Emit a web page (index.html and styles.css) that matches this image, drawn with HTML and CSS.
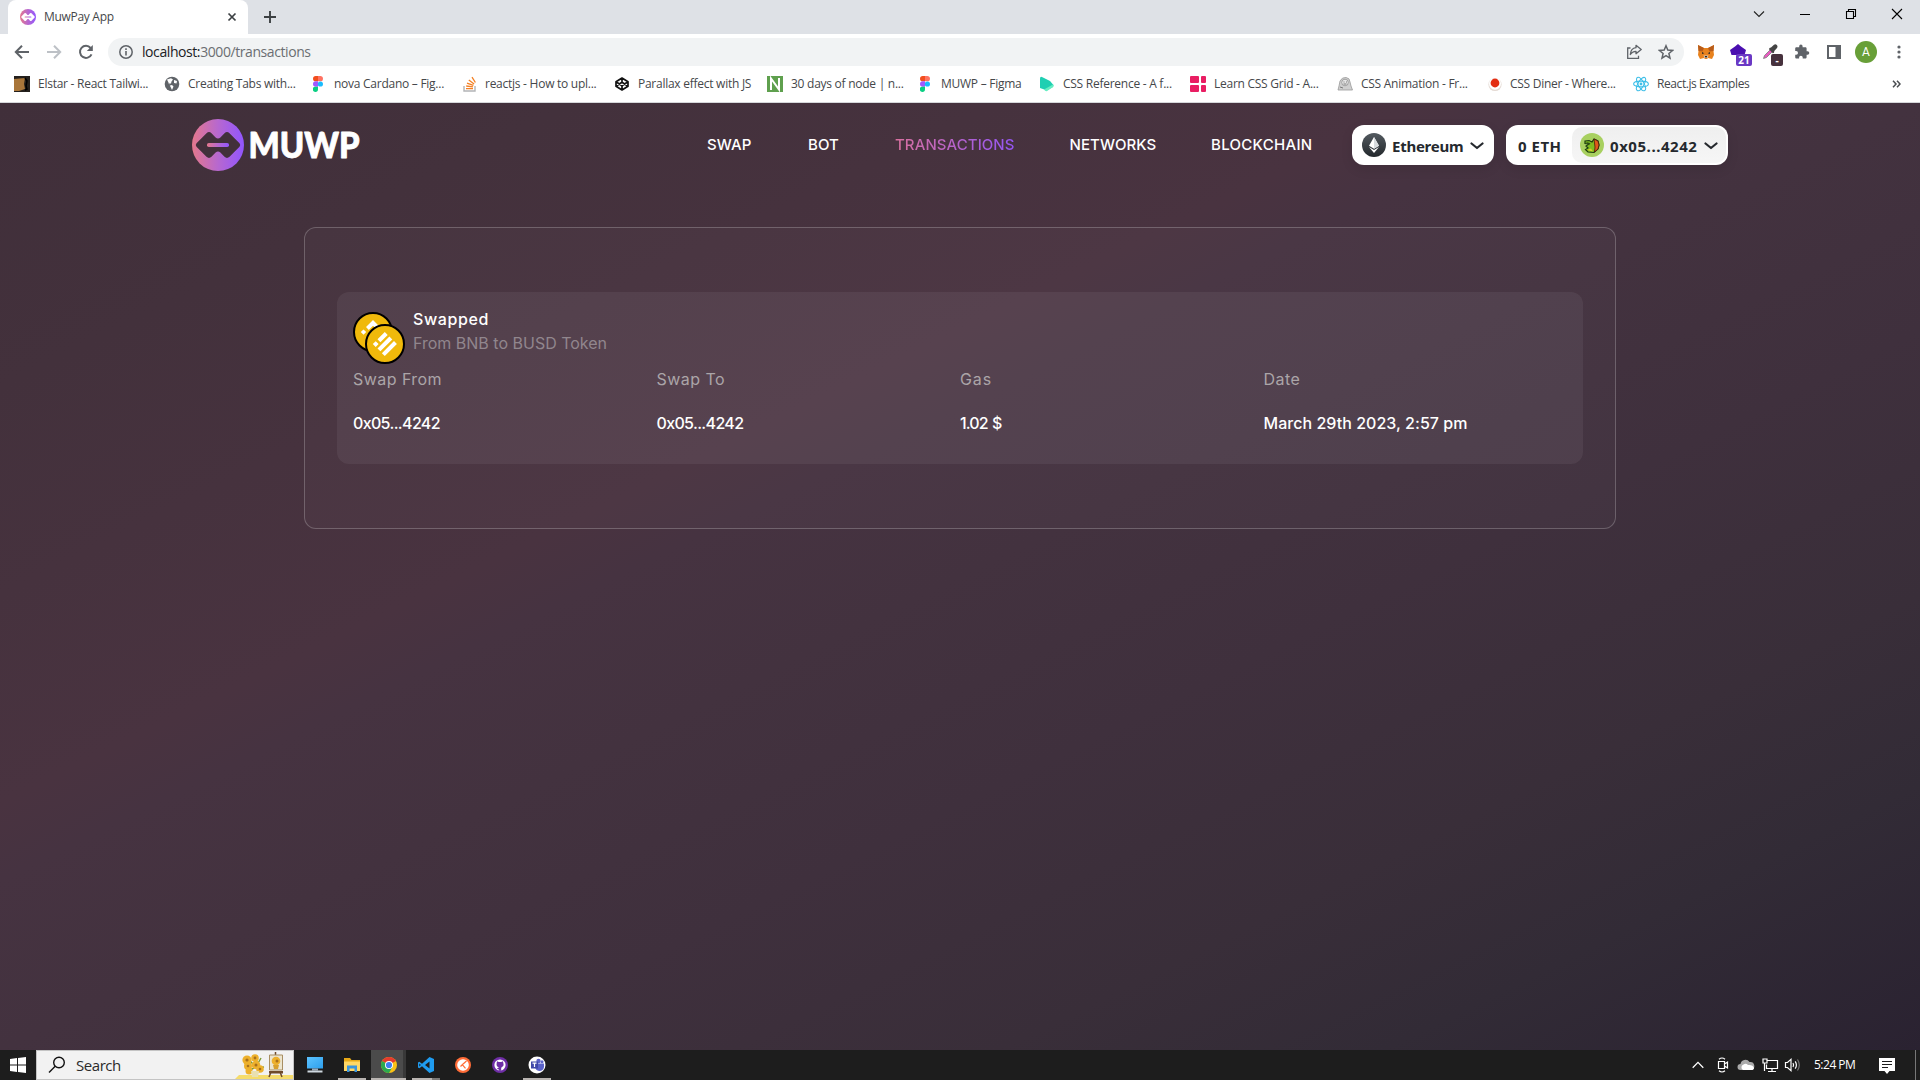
FILE: index.html
```html
<!DOCTYPE html>
<html lang="en">
<head>
<meta charset="utf-8">
<title>MuwPay App</title>
<link rel="stylesheet" href="styles.css">
</head>
<body>
<svg class="defs" width="0" height="0">
  <defs>
    <linearGradient id="brand" x1="0" x2="1" y1="0" y2="0"><stop offset="0" stop-color="#e4788c"/><stop offset=".5" stop-color="#b768cf"/><stop offset="1" stop-color="#9155ff"/></linearGradient>
    <linearGradient id="ethbg" x1="0" x2="0" y1="0" y2="1"><stop offset="0" stop-color="#535a60"/><stop offset="1" stop-color="#23282c"/></linearGradient>
    <linearGradient id="screen" x1="0" x2="1" y1="0" y2="1"><stop offset="0" stop-color="#5cc3ff"/><stop offset="1" stop-color="#2d9fec"/></linearGradient>
    <symbol id="figma" viewBox="0 0 10 16"><path d="M5 0H2.700a2.600 2.600 0 0 0 0 5.300H5z" fill="#f24e1e"/><path d="M5 0h2.300a2.600 2.600 0 0 1 0 5.300H5z" fill="#ff7262"/><path d="M5 5.300H2.700a2.700 2.700 0 0 0 0 5.400H5z" fill="#a259ff"/><circle cx="7.400" cy="8" r="2.600" fill="#1abcfe"/><path d="M5 10.700H2.700A2.600 2.600 0 1 0 5 13.300z" fill="#0acf83"/></symbol>
    <symbol id="mark" viewBox="0 0 52 52"><circle cx="26" cy="26" r="26" fill="url(#brand)"/><path class="cut" d="M4.500 24.200 L14.500 14.200 Q17 12 19.500 14.200 L23.600 18.400 Q26 20.400 28.400 18.400 L32.500 14.200 Q35 12 37.500 14.200 L47.500 24.200 Q49 26 47.500 27.800 L37.500 37.800 Q35 40 32.500 37.800 L28.400 33.600 Q26 31.600 23.600 33.600 L19.500 37.800 Q17 40 14.500 37.800 L4.500 27.800 Q3 26 4.500 24.200Z"/><rect x="15" y="24" width="22" height="4" rx="1.800" fill="url(#brand)"/></symbol>
  </defs>
</svg>

<div class="tabstrip">
  <div class="tab">
    <svg class="favicon" width="16" height="16"><use href="#mark"/></svg>
    <span class="tab-title">MuwPay App</span>
    <svg class="tab-close" width="16" height="16"><path d="M4.500 4.500l7 7M11.500 4.500l-7 7" stroke="#3c4043" stroke-width="1.700"/></svg>
  </div>
  <svg class="newtab" width="16" height="16"><path d="M8 2v12M2 8h12" stroke="#3c4043" stroke-width="1.900"/></svg>
  <div class="window-controls">
    <svg width="14" height="14"><path d="M2 4.500l5 5 5-5" fill="none" stroke="#222" stroke-width="1.100"/></svg>
    <svg width="14" height="14"><path d="M2 7.500h10" stroke="#000"/></svg>
    <svg width="14" height="14"><path d="M2.500 4.500h7v7h-7zM4.500 4.500v-2h7v7h-2" fill="none" stroke="#000" stroke-width="1.100"/></svg>
    <svg width="14" height="14"><path d="M2 2l10 10M12 2L2 12" stroke="#000" stroke-width="1.100"/></svg>
  </div>
</div>

<div class="toolbar">
  <div class="nav-buttons">
    <svg width="16" height="16"><path d="M15 8H2.500M8 1.800L1.800 8 8 14.200" fill="none" stroke="#5f6368" stroke-width="2"/></svg>
    <svg width="16" height="16"><path d="M1 8h12.500M8 1.800L14.200 8 8 14.200" fill="none" stroke="#bdc1c6" stroke-width="2"/></svg>
    <svg width="16" height="16"><path d="M13.500 10.300A6 6 0 1 1 12.600 4" fill="none" stroke="#5f6368" stroke-width="2"/><path d="M14.800 1v6H8.800z" fill="#5f6368"/></svg>
  </div>
  <div class="omnibox">
    <svg width="14" height="14"><circle cx="7" cy="7" r="6.200" fill="none" stroke="#5f6368" stroke-width="1.500"/><path d="M7 6v4.500M7 3.300v1.600" stroke="#5f6368" stroke-width="1.600"/></svg>
    <span class="url">localhost:<span class="url-path">3000/transactions</span></span>
    <svg class="share" width="16" height="16"><path d="M4.500 4H1.700v10.300h10.800v-2.500" fill="none" stroke="#5f6368" stroke-width="1.300"/><path d="M10 1.300L15.200 5.500 10 9.700V7.300C7.500 7.200 5.600 8.400 4.300 10.500 4.600 6.500 6.500 4.100 10 3.700z" fill="none" stroke="#5f6368" stroke-width="1.300" stroke-linejoin="round"/></svg>
    <svg width="16" height="16"><path d="M8 1.800l1.800 4.300 4.700.4-3.600 3 1.100 4.600L8 11.700l-4 2.400 1.100-4.600-3.600-3 4.700-.4z" fill="none" stroke="#5f6368" stroke-width="1.500"/></svg>
  </div>
  <div class="extensions">
    <svg width="16" height="16"><path d="M0 1l6 3h4l6-3-.5 6 .5 4-2 4-4-1-1 1H7l-1-1-4 1-2-4 .5-4z" fill="#e8821e"/><path d="M0 1l6 3-1.500 3.500L.5 7zM16 1l-6 3 1.500 3.500 4-.5z" fill="#b85c1a"/><path d="M5.500 11.500h5L9.500 14h-3z" fill="#dccbbd"/><path d="M4 8l2.300 1.300L4 10zM12 8L9.700 9.300 12 10zM6.700 12h2.600l-.5 1.500H7.200z" fill="#2b2b2b"/></svg>
    <div class="ext-badged">
      <svg width="16" height="16"><path d="M8 0l3 2.500L16 6l-1.500 5H1.500L0 6l5-3.500z" fill="#4a0fb0"/></svg>
      <span class="badge">21</span>
    </div>
    <div class="ext-badged">
      <svg width="16" height="16"><path d="M1.500 14.500l1-3L9 5l2 2-6.500 6.500z" fill="#e75bc0" stroke="#7b7b7b" stroke-width=".8"/><path d="M7.500 4l1.500-.5L12 .8q1.500-1 2.800.3t.2 2.900L12.300 7l-.3 1.700-1.200.5L7 5.300z" fill="#444"/></svg>
      <span class="badge badge-dark">-</span>
    </div>
    <svg width="16" height="16"><path d="M13.600 7.300h-1V4.600c0-.8-.6-1.300-1.300-1.300H8.600v-1a1.700 1.700 0 0 0-3.400 0v1H2.500c-.7 0-1.300.5-1.300 1.300v2.500h1a1.800 1.800 0 0 1 0 3.600h-1v2.600c0 .7.600 1.300 1.300 1.300h2.600v-1a1.800 1.800 0 0 1 3.600 0v1h2.600c.7 0 1.300-.6 1.300-1.300v-2.600h1a1.700 1.700 0 0 0 0-3.400z" fill="#5f6368"/></svg>
    <svg width="14" height="14"><path d="M0 0h14v14H0zM2 2v10h6.500V2z" fill="#5f6368" fill-rule="evenodd"/></svg>
    <span class="avatar">A</span>
    <svg class="kebab" width="4" height="16"><circle cx="2" cy="3" r="1.600" fill="#5f6368"/><circle cx="2" cy="8" r="1.600" fill="#5f6368"/><circle cx="2" cy="13" r="1.600" fill="#5f6368"/></svg>
  </div>
</div>

<div class="bookmarks">
  <div class="bm"><svg width="16" height="16"><path d="M0 0h16v16H0z" fill="#24201d"/><path d="M0 3l11-1-1 6 1 5-6 2H0z" fill="#a9763a"/><path d="M11 2l2 3-1 5 1 3-2 1" fill="none" stroke="#000" stroke-width="1.500"/></svg><span>Elstar - React Tailwi...</span></div>
  <div class="bm"><svg width="16" height="16"><circle cx="8" cy="8" r="7.300" fill="#5f6368"/><path d="M3 3.500L7 2.300l2 1.200-1.500 2-.5 2H4.500l1.500 2L8 9l1.500 1.500L8 14M10 4l3 1-.5 2.500L10 7z" fill="#fff"/></svg><span>Creating Tabs with...</span></div>
  <div class="bm bm-n21"><svg width="10" height="16"><use href="#figma"/></svg><span>nova Cardano – Fig...</span></div>
  <div class="bm bm-n22"><svg width="14" height="16"><path d="M1 10v5h11v-5" fill="none" stroke="#b3b4b6" stroke-width="1.400"/><path d="M3 12.600h7M3.200 10l6.800.9M4 7.200l6.400 2.200M5.800 4l5.300 4M9 1.200l3.400 5.300" stroke="#f48024" stroke-width="1.300"/></svg><span>reactjs - How to upl...</span></div>
  <div class="bm bm-n23"><svg width="14" height="16"><path d="M7 2l6 3.800v4.400L7 14l-6-3.800V5.800zM1 5.800l6 4 6-4M1 10.200l6-4 6 4M7 2v4.200M7 9.800V14" fill="none" stroke="#111" stroke-width="1.700" stroke-linejoin="round"/></svg><span>Parallax effect with JS</span></div>
  <div class="bm"><svg width="16" height="16"><path d="M0 0h16v16H0z" fill="#5fa04e"/><path d="M4 14V2.500l8 11V2" fill="none" stroke="#fff" stroke-width="2"/></svg><span>30 days of node | n...</span></div>
  <div class="bm bm-n21"><svg width="10" height="16"><use href="#figma"/></svg><span>MUWP – Figma</span></div>
  <div class="bm bm-n23"><svg width="14" height="16"><path d="M0 2.500Q0 0 2.500 1.200L10 5l3 3.500q1 1.200-.5 2.500L7 14.500 0 12z" fill="#1fcfb2"/><path d="M4 13.500l9-5 .6.800q.5 1-.8 1.900L7 15q-1.500.8-3-1.500z" fill="#65eec2"/></svg><span>CSS Reference - A f...</span></div>
  <div class="bm"><svg width="16" height="16" fill="#e91e63"><rect width="9" height="7" rx="1"/><rect x="11" width="5" height="7" rx="1"/><rect y="9" width="9" height="7" rx="1"/><rect x="11" y="9" width="5" height="7" rx="1"/></svg><span>Learn CSS Grid - A...</span></div>
  <div class="bm"><svg width="16" height="16"><path d="M1 14l1-4 1-5q2-4 6-3.500T13 6l1 4 1.500 4z" fill="#cfcfcf" stroke="#999" stroke-width=".8"/><circle cx="8" cy="6.500" r="3.300" fill="#e7e7e7" stroke="#888" stroke-width=".7"/><path d="M6.500 6h1M9 6h1M6.500 8h3M3 11l3 1" stroke="#777"/></svg><span>CSS Animation - Fr...</span></div>
  <div class="bm bm-n22"><svg width="14" height="16"><circle cx="7" cy="8.500" r="6.600" fill="#e4dad3"/><circle cx="7" cy="7.800" r="6" fill="#fff"/><circle cx="7" cy="7" r="4.400" fill="#e32d12"/></svg><span>CSS Diner - Where...</span></div>
  <div class="bm"><svg width="16" height="16"><g fill="none" stroke="#3fbfe8" stroke-width="1.100"><ellipse cx="8" cy="8" rx="7.400" ry="2.900"/><ellipse cx="8" cy="8" rx="7.400" ry="2.900" transform="rotate(60 8 8)"/><ellipse cx="8" cy="8" rx="7.400" ry="2.900" transform="rotate(120 8 8)"/></g><circle cx="8" cy="8" r="1.400" fill="#3fbfe8"/></svg><span class="bm-tight">React.js Examples</span></div>
  <svg class="overflow" width="9" height="8"><path d="M1 .8L4 4 1 7.200M5 .8L8 4 5 7.200" fill="none" stroke="#4a4d51" stroke-width="1.500"/></svg>
</div>

<main class="app">
  <header class="header">
    <svg class="logo" width="180" height="52">
      <use href="#mark" width="52" height="52"/>
      <text x="56.500" y="38.500" textLength="111" lengthAdjust="spacingAndGlyphs">MUWP</text>
    </svg>
    <nav class="menu">
      <a>SWAP</a><a>BOT</a><a class="active">TRANSACTIONS</a><a>NETWORKS</a><a class="wide">BLOCKCHAIN</a>
    </nav>
    <button class="chain">
      <svg width="24" height="24"><circle cx="12" cy="12" r="12" fill="url(#ethbg)"/><path d="M12 4v6.300l-5 2.400zM12 4v6.300l5 2.400zM7 12.700l5 3 5-3-5-2.400zM7 14l5 6 5-6-5 3z" fill="#fff"/><path d="M12 4v11.700l5-3z" fill="#d8dcdf"/></svg>
      <span class="chain-name">Ethereum</span>
      <svg class="caret" width="14" height="8"><path d="M1.500 1.500L7 6l5.500-4.500" fill="none" stroke="#25292e" stroke-width="2.200" stroke-linecap="round" stroke-linejoin="round"/></svg>
    </button>
    <button class="wallet">
      <span class="balance">0 ETH</span>
      <span class="account">
        <svg width="24" height="24"><circle cx="12" cy="12" r="12" fill="#a8d060"/><path d="M5 8l4-.5L12 9l2-3 4 2 1 4-1 4-4 3.500-6-.5-2.500-2.500L8 15l-2-2 3-2-4-.5z" fill="#7fbd1f" stroke="#1c3a10" stroke-width="1.200"/><path d="M14 6l4 2 1 4-1 4-3.500 3 .5-5z" fill="#e05a1b" stroke="#4a1d08" stroke-width=".8"/><path d="M6 9l4 1-1 2z" fill="#284a12"/><path d="M7 17l6 1.500-2-3z" fill="#d9cf2c"/></svg>
        <span class="address">0x05...4242</span>
        <svg class="caret" width="14" height="8"><path d="M1.500 1.500L7 6l5.500-4.500" fill="none" stroke="#25292e" stroke-width="2.200" stroke-linecap="round" stroke-linejoin="round"/></svg>
      </span>
    </button>
  </header>

  <section class="panel">
    <article class="tx">
      <div class="tx-head">
        <svg width="52" height="52">
          <circle cx="20" cy="20" r="19" fill="#f0b90b" stroke="#000" stroke-width="2"/>
          <path d="M20 8l7 7-2.800 2.800L20 13.700l-4.200 4.200L13 15zM10.500 17.400l2.700 2.700-2.700 2.700-2.700-2.700z" fill="#fff"/>
          <circle cx="32" cy="32" r="19" fill="#f0b90b" stroke="#000" stroke-width="2"/>
          <path d="M31.800 20l2.900 2.900-7.300 7.300-2.900-2.900zM36.400 24.500l2.900 2.900-11.900 11.900-2.900-2.900zM22.700 29.200l2.900 2.900-2.900 2.900-2.900-2.900zM41 29.100l2.900 2.900-12.100 12.100-2.900-2.900z" fill="#fff"/>
        </svg>
        <div class="tx-label">
          <p class="tx-title">Swapped</p>
          <p class="tx-route">From BNB to BUSD Token</p>
        </div>
      </div>
      <dl class="tx-grid">
        <div><dt class="ls-5">Swap From</dt><dd class="hex">0x05...4242</dd></div>
        <div><dt class="ls-5">Swap To</dt><dd class="hex">0x05...4242</dd></div>
        <div><dt class="ls-9">Gas</dt><dd class="hex gas">1.02 $</dd></div>
        <div><dt class="ls-5">Date</dt><dd>March 29th 2023, 2:57 pm</dd></div>
      </dl>
    </article>
  </section>
</main>

<footer class="taskbar">
  <div class="start"><svg width="16" height="16"><path d="M0 2l7-1v6.500H0zM8 .9L16 0v7.500H8zM0 8.500h7V15l-7-1zM8 8.500h8V16l-8-.9z" fill="#fff"/></svg></div>
  <div class="search">
    <svg class="lens" width="18" height="18"><circle cx="11" cy="6.500" r="5.300" fill="none" stroke="#111" stroke-width="1.400"/><path d="M7.200 10.300L1 16.500" stroke="#111" stroke-width="1.400"/></svg>
    <span>Search</span>
    <svg class="flowers" width="58" height="28"><path d="M4 24h54v4H0z" fill="#f5dc6c"/><path d="M19 14l-6-6M22 14l4-7M22 17l7-1M19 17l-6 3" stroke="#7c9a35" stroke-width="1.500"/><g fill="#edb02c"><circle cx="12" cy="9" r="4.600"/><circle cx="20" cy="7" r="3.800"/><circle cx="13" cy="15" r="4"/><circle cx="21" cy="14" r="4.300"/><circle cx="25" cy="18" r="3.800"/><circle cx="14" cy="20" r="3.500"/></g><g fill="#a8701b"><circle cx="12" cy="9" r="1.600"/><circle cx="20" cy="7" r="1.400"/><circle cx="21" cy="14" r="1.500"/><circle cx="25" cy="18" r="1.300"/><circle cx="13" cy="15" r="1.300"/></g><path d="M16 20h8l-1 6h-6z" fill="#e9e0b0"/><path d="M36 21l-2 5M45 21l2 5M40.500 1v3" stroke="#6e4a2a" stroke-width="1.500"/><path d="M34.500 4h13v15h-13z" fill="#ece5cf" stroke="#a88e62"/><circle cx="41" cy="10" r="4.300" fill="#edb02c"/><circle cx="42" cy="10" r="1.500" fill="#a8701b"/><path d="M38 14h6l-1 4h-4z" fill="#d8a02c"/><path d="M34 20h14v2.500H34z" fill="#6e4a2a"/></svg>
  </div>
  <div class="apps">
    <div class="app-icon"><svg width="18" height="18"><path d="M1 1h16v11.500H1z" fill="url(#screen)"/><path d="M6 12.500h6v2H6z" fill="#9ab"/><path d="M1.500 14.500h15v2h-15z" fill="#cfd8df"/></svg></div>
    <div class="app-icon open"><svg width="18" height="18"><path d="M1 2h6l1.500 2H17v5H1z" fill="#e8a917"/><path d="M1 5.500h16V15H1z" fill="#ffd765"/><path d="M4 9.500h10V16h-2.500v-3.500h-5V16H4z" fill="#3b95dc"/></svg></div>
    <div class="app-icon open current"><svg width="18" height="18"><circle cx="9" cy="9" r="8" fill="#fbc116"/><path d="M9 9L2.070 5A8 8 0 0 1 15.930 5z" fill="#e33b2e"/><path d="M9 9l-6.930-4A8 8 0 0 0 9 17l3.500-6z" fill="#2da94f"/><circle cx="9" cy="9" r="4" fill="#fff"/><circle cx="9" cy="9" r="3.100" fill="#3f7ef0"/></svg></div>
    <div class="app-icon open stacked"><svg width="18" height="18"><path d="M12.500 1L17 3v12l-4.500 2L5 10.200 2.300 12.300 1 11.600V6.400l1.300-.7L5 7.800zM12.500 5.500L8 9l4.500 3.500zM2.300 7.500v3L3.900 9z" fill="#1f9cf0" fill-rule="evenodd"/></svg></div>
    <div class="app-icon"><svg width="18" height="18"><circle cx="9" cy="9" r="8" fill="#ff6c37"/><circle cx="9" cy="9" r="5.800" fill="#fff"/><path d="M12.500 5L8.500 8.500 6.500 10.500M8.500 8.800l3 3.500" fill="none" stroke="#ff6c37" stroke-width="1.200"/></svg></div>
    <div class="app-icon"><svg width="18" height="18"><circle cx="9" cy="9" r="8" fill="#6e2ea5"/><circle cx="9" cy="9" r="5.600" fill="#fff"/><path d="M6 5.200l1.800.9h2.400l1.800-.9.300 1.800q1 2.800-1.300 4-.8.500-.8 1.300v2.500H7.800v-1.500q-1.500.2-2-1.200 1.200.3 2-.8-2.900-1-2.100-4.300z" fill="#6e2ea5"/></svg></div>
    <div class="app-icon open"><svg width="18" height="18"><circle cx="9" cy="9" r="8.500" fill="#fff"/><circle cx="10.500" cy="5" r="2.200" fill="#5a62c9"/><circle cx="14" cy="5.700" r="1.500" fill="#5a62c9"/><path d="M7 7.500h9v3.500q-.6 4-4.800 4-3.700-.4-4.200-4z" fill="#5a62c9"/><path d="M3 5.500h7v7H3z" fill="#3f48a9"/><path d="M4.500 7.200h4M6.500 7.200V11" stroke="#fff" stroke-width="1.200"/></svg></div>
  </div>
  <div class="tray">
    <svg width="12" height="8"><path d="M.7 6.700L6 1.400l5.300 5.300" fill="none" stroke="#fff" stroke-width="1.300"/></svg>
    <svg width="14" height="16"><path d="M2.500 4.500h6v7h-6zM8.500 7l3-2v6l-3-2M3 2.200q3-2.400 6 0M3 13.800q3 2.400 6 0" fill="none" stroke="#fff" stroke-width="1.200"/></svg>
    <svg width="18" height="12"><path d="M3.500 11a3 3 0 0 1 0-6 5 5 0 0 1 9-2 4 4 0 0 1 1.500 8z" fill="#aaa"/><path d="M6 11a3 3 0 0 1 .5-5.500Q9 4 11 6q5-.5 6 3 0 1.500-1.500 2z" fill="#fff"/></svg>
    <svg width="18" height="16"><path d="M6 3.500h10.500v8H5.500v-4M11 11.500v3M7 14.500h8M2 2h4v4H2zM3.500 6v8" fill="none" stroke="#fff" stroke-width="1.200"/></svg>
    <svg width="18" height="16"><path d="M1.500 5.500h2L7 2.300v11.400L3.500 10.500h-2z" fill="none" stroke="#fff" stroke-width="1.200"/><path d="M9 6q1.200 2 0 4M11.200 4.300q2.400 3.700 0 7.400" fill="none" stroke="#fff" stroke-width="1.200"/><path d="M13.500 2.500q3.600 5.500 0 11" fill="none" stroke="#777" stroke-width="1.200"/></svg>
    <span class="clock">5:24 PM</span>
    <svg class="notice" width="16" height="16"><path d="M0 0h16v13H10.500L8 16l-2.500-3H0z" fill="#fff"/><path d="M3 3.500h10M3 6.500h10M3 9.500h6" stroke="#1c1c1c" stroke-width="1.200"/></svg>
    <span class="show-desktop"></span>
  </div>
</footer>
</body>
</html>
```
FILE: styles.css
```css
* { box-sizing: border-box; }
body {
  margin: 0;
  width: 1920px;
  height: 1080px;
  display: flex;
  flex-direction: column;
  overflow: hidden;
  font-family: "Open Sans", "Noto Sans", sans-serif;
  background: #fff;
}
svg { display: block; flex: none; }
.defs { position: absolute; }
p, dl, dd { margin: 0; }
.cut { fill: var(--cut, #42303b); }

/* browser tab strip */
.tabstrip { height: 34px; background: #dee1e6; display: flex; align-items: center; padding-left: 8px; flex: none; }
.tab {
  width: 240px; height: 34px; background: #fff; border-radius: 8px 8px 0 0;
  display: flex; align-items: center; padding: 0 8px 0 12px;
  font-size: 12px; letter-spacing: -0.3px; color: #45474a;
}
.favicon { --cut: #fff; }
.tab-title { margin-left: 8px; flex: 1; padding-bottom: 1px; }
.newtab { margin-left: 14px; }
.window-controls { margin: -6px 16px 0 auto; display: flex; gap: 32px; }

/* address bar */
.toolbar { height: 36px; display: flex; align-items: center; padding-left: 14px; flex: none; }
.nav-buttons { display: flex; gap: 16px; width: 94px; }
.omnibox {
  width: 1576px; height: 28px; border-radius: 14px; background: #f1f3f4;
  display: flex; align-items: center; padding: 0 10px 0 11px;
}
.url { margin-left: 9px; padding-bottom: 1px; font-size: 14px; letter-spacing: -0.42px; color: #202124; }
.url-path { color: #6b6e72; }
.share { margin: 0 16px 0 auto; }
.extensions { display: flex; align-items: center; margin-left: 14px; }
.extensions > * + * { margin-left: 16px; }
.ext-badged { position: relative; }
.badge {
  position: absolute; left: 6px; top: 10px; width: 16px; height: 12px; border-radius: 2px;
  background: #6a38c4; color: #fff; font: 700 10px/12px "Open Sans", sans-serif; text-align: center;
}
.badge-dark { left: 9px; width: 12px; background: #46313d; }
.extensions > svg:nth-child(5) { margin-left: 17px; }
.extensions .avatar { margin-left: 14px; }
.avatar { width: 22px; height: 22px; border-radius: 50%; background: #689f38; color: #fff; font: 12px/22px Roboto, sans-serif; text-align: center; }
.extensions .kebab { margin-left: 20px; }

/* bookmarks bar */
.bookmarks {
  height: 33px; flex: none; border-bottom: 1px solid #d5d7da; padding: 0 19px 4px 14px;
  display: grid; align-items: center;
  grid-template-columns: 150px 149px 150px 152px 152px 153px 120px 150px 147px 151px 145px 1fr 9px;
  font-size: 12px; letter-spacing: -0.26px; color: #45474a; white-space: nowrap;
}
.bm { display: grid; grid-template-columns: 24px auto; align-items: center; justify-content: start; }
.bm span { padding-bottom: 1px; }
.bm-n21 { grid-template-columns: 21px auto; }
.bm-n22 { grid-template-columns: 22px auto; }
.bm-n23 { grid-template-columns: 23px auto; }
.bm-tight { letter-spacing: -0.42px; }

/* application */
.app {
  flex: 1;
  background: linear-gradient(to bottom right, #402f3a 0%, #43313c 15%, #493340 37%, #463341 41%, #43323f 50%, #3f303d 62%, #392e39 76%, #322b36 86%, #2a2231 100%);
  font-family: Inter, "Noto Sans", sans-serif;
}
.header { height: 84px; display: flex; align-items: center; padding-left: 192px; }
.logo text { font-family: Lato, sans-serif; font-size: 36px; font-weight: 900; fill: #fff; stroke: #fff; stroke-width: 0.9px; stroke-linejoin: round; }
.menu {
  margin-left: 335px; width: 645px; display: grid; grid-template-columns: 101px 87px 174.5px 141.5px 141px;
  font-size: 15px; line-height: 24px; font-weight: 450; letter-spacing: 0.08px; color: #fff;
}
.active { width: 119px; background: linear-gradient(90deg, #d9709f, #9455f4); -webkit-background-clip: text; background-clip: text; color: transparent; }
.wide { letter-spacing: 0.3px; }
button { border: 0; font: 700 15px/24px "Noto Sans", sans-serif; color: #25292e; padding: 0; }
.chain, .wallet { height: 40px; border-radius: 12px; background: #fff; display: flex; align-items: center; box-shadow: 0 4px 12px rgba(0,0,0,.1); }
.chain { width: 142px; padding-left: 10px; gap: 6px; }
.chain-name { width: 72px; letter-spacing: -0.25px; text-align: left; padding-top: 1px; }
.wallet { width: 222px; margin-left: 12px; padding: 2px; }
.balance { width: 64px; padding: 1px 0 0 10px; text-align: left; letter-spacing: 0.5px; white-space: nowrap; }
.account { width: 154px; height: 36px; border-radius: 10px; background: linear-gradient(#efefef, #f6f6f6); display: flex; align-items: center; padding-left: 8px; }
.address { width: 93px; padding: 1px 0 0 6px; text-align: left; letter-spacing: 0.55px; }
.address + .caret { margin-left: 7px; }
.caret { margin-top: 1px; }

.panel {
  width: 1312px; height: 302px; margin: 40px 0 0 304px; padding: 64px 32px;
  border: 1px solid rgba(255,255,255,.22); border-radius: 12px; background: rgba(255,255,255,.022);
}
.tx {
  height: 172px; padding: 16px; border-radius: 12px; background: rgba(255,255,255,.06);
  font-size: 16px; line-height: 24px;
}
.tx-head { height: 48px; display: flex; gap: 8px; }
.tx-head svg { margin-top: 4px; }
.tx-label { margin-top: -1px; }
.tx-title { color: #fff; font-weight: 450; letter-spacing: 0.6px; }
.tx-route { color: #91868d; letter-spacing: 0; }
.tx-grid { margin-top: 11px; display: grid; grid-template-columns: repeat(4, 1fr); }
dt { color: #aba5a8; }
dd { margin-top: 20px; color: #fff; font-weight: 450; letter-spacing: 0.04px; }
.ls-5 { letter-spacing: 0.45px; }
.ls-9 { letter-spacing: 0.9px; }
.hex { letter-spacing: -0.65px; }
.gas { word-spacing: 1px; letter-spacing: -0.9px; }

/* taskbar */
.taskbar { height: 30px; flex: none; background: #1d1d1d; display: flex; color: #fff; }
.start { width: 36px; display: flex; align-items: center; padding-left: 10px; }
.search {
  width: 258px; background: #f2f2f2; border: 1px solid #c4c4c4; display: flex; align-items: center;
  padding-left: 11px; color: #2a2a2a; font-size: 15px; letter-spacing: -0.45px;
}
.search span { margin-left: 10px; }
.flowers { margin-left: auto; }
.apps { display: flex; padding-left: 2px; }
.app-icon { width: 37px; display: flex; align-items: center; justify-content: center; position: relative; }
.open::after { content: ""; position: absolute; bottom: 0; left: 5px; width: 28px; height: 2px; background: #b9b4b1; }
.current { background: linear-gradient(90deg, transparent 1px, #4b4b4b 1px 33px, #383838 33px 36px, transparent 36px); }
.current::after { left: 1px; width: 35px; }
.stacked::after { background: linear-gradient(90deg, #b9b4b1 20px, #7d7a78 20px); }
.tray { margin-left: auto; display: flex; align-items: center; }
.tray svg:nth-child(2) { margin-left: 12px; }
.tray svg:nth-child(3) { margin-left: 7px; }
.tray svg:nth-child(4) { margin-left: 6px; }
.tray svg:nth-child(5) { margin-left: 5px; }
.clock { width: 43px; margin-left: 12px; padding-bottom: 1px; font-size: 12px; letter-spacing: -0.5px; white-space: nowrap; }
.tray .notice { margin: 2px 20px 0 22px; }
.show-desktop { width: 5px; height: 30px; border-left: 1px solid #777; }
```
